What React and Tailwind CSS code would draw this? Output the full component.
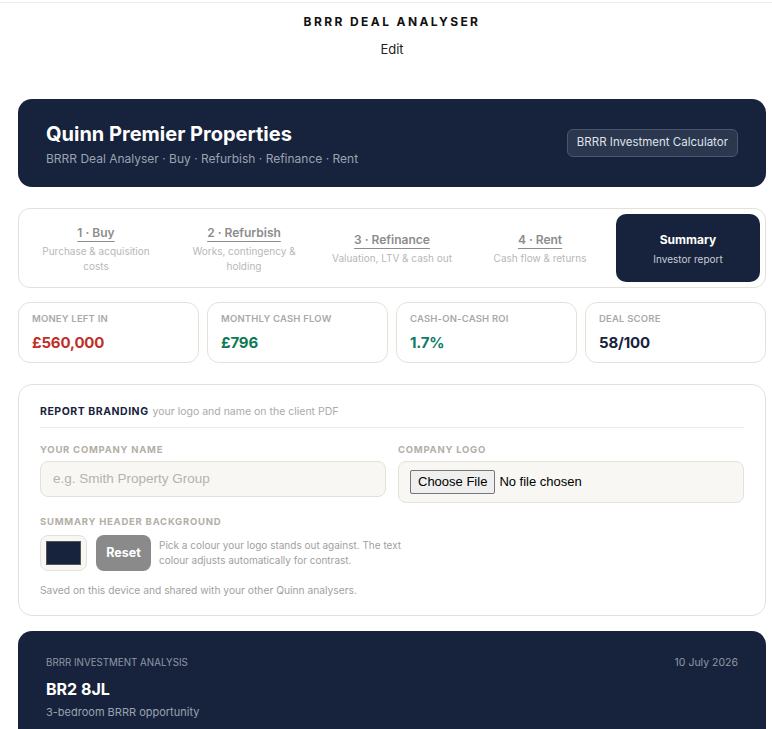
import React from "react";

const F = { fontFamily: "Inter, 'Liberation Sans', sans-serif" };

function Step({ title, sub, active }) {
  if (active) {
    return (
      <div className="flex flex-col items-center justify-center rounded-[10px] bg-[#17233c] h-[68px]">
        <div className="text-[12px] font-bold text-white leading-[16px] mt-[2px]">{title}</div>
        <div className="text-[10px] text-[#c9cdd6] leading-[14px] mt-[4px]">{sub}</div>
      </div>
    );
  }
  return (
    <div className="flex flex-col items-center justify-center h-[68px] px-2 pt-[2px] text-center">
      <div className="text-[12px] font-semibold text-[#8c8c8c] underline underline-offset-[4px] decoration-[#8c8c8c] leading-[16px]">{title}</div>
      <div className="text-[10px] text-[#b8b8b8] leading-[15px] mt-[3px]">{sub}</div>
    </div>
  );
}

function Stat({ label, value, color }) {
  return (
    <div className="rounded-[12px] border border-[#e4e1d8] h-[61px] pl-[13px] pt-[9px]">
      <div className="text-[9.5px] font-semibold text-[#a9a9a9] tracking-[0.02em] leading-[14px]">{label}</div>
      <div className={`text-[15px] font-bold leading-[20px] mt-[7px] tracking-[-0.01em] ${color}`}>{value}</div>
    </div>
  );
}

export default function App() {
  return (
    <div style={F} className="bg-white min-h-[729px] w-[772px] overflow-hidden">
      <div className="h-[2px] bg-white" />
      <div className="h-[1px] bg-[#ececec]" />
      <div className="pl-[18px] pr-[6px]">
        <div className="text-center pt-[11px]">
          <div className="text-[12px] font-bold tracking-[0.2em] text-[#111] leading-[16px]">BRRR DEAL ANALYSER</div>
          <div className="text-[13px] text-[#222] leading-[18px] mt-[10px]">Edit</div>
        </div>

        <div className="mt-[41px] rounded-[14px] bg-[#17233c] h-[88px] flex items-center justify-between pl-[28px] pr-[28px]">
          <div className="pt-[2px]">
            <div className="text-[20px] font-bold text-white leading-[24px]">Quinn Premier Properties</div>
            <div className="text-[12px] text-[#9aa2b1] leading-[16px] mt-[5px]">BRRR Deal Analyser · Buy · Refurbish · Refinance · Rent</div>
          </div>
          <div className="rounded-[6px] border border-[#4b566c] bg-[#2b374e] px-[9px] h-[28px] flex items-center text-[11.5px] text-[#dfe2e8]">BRRR Investment Calculator</div>
        </div>

        <div className="mt-[21px] rounded-[12px] border border-[#e4e1d8] p-[5px] grid grid-cols-5 gap-[4px]">
          <Step title="1 · Buy" sub="Purchase & acquisition costs" />
          <Step title="2 · Refurbish" sub="Works, contingency & holding" />
          <Step title="3 · Refinance" sub="Valuation, LTV & cash out" />
          <Step title="4 · Rent" sub="Cash flow & returns" />
          <Step title="Summary" sub="Investor report" active />
        </div>

        <div className="mt-[14px] grid grid-cols-4 gap-[8px]">
          <Stat label="MONEY LEFT IN" value="£560,000" color="text-[#c0302a]" />
          <Stat label="MONTHLY CASH FLOW" value="£796" color="text-[#0d7a55]" />
          <Stat label="CASH-ON-CASH ROI" value="1.7%" color="text-[#0f7a66]" />
          <Stat label="DEAL SCORE" value="58/100" color="text-[#17233c]" />
        </div>

        <div className="mt-[21px] rounded-[14px] border border-[#e4e1d8] h-[232px] px-[21px] pt-[19px]">
          <div className="flex items-baseline gap-[4px] leading-[16px]">
            <span className="text-[10.5px] font-bold tracking-[0.05em] text-[#17233c]">REPORT BRANDING</span>
            <span className="text-[10.5px] text-[#aaa]">your logo and name on the client PDF</span>
          </div>
          <div className="h-[1px] bg-[#ebe9e4] mt-[7px]" />
          <div className="grid grid-cols-2 gap-[12px] mt-[16px]">
            <div>
              <div className="text-[9.5px] font-bold tracking-[0.08em] text-[#b3aea6] leading-[12px]">YOUR COMPANY NAME</div>
              <div className="mt-[5px] h-[36px] rounded-[8px] border border-[#e4e1d8] bg-[#f8f7f3] flex items-center pl-[12px] text-[13.5px] text-[#b3b3b3]" style={{ fontFamily: "'Liberation Sans', sans-serif" }}>e.g. Smith Property Group</div>
            </div>
            <div>
              <div className="text-[9.5px] font-bold tracking-[0.08em] text-[#b3aea6] leading-[12px]">COMPANY LOGO</div>
              <div className="mt-[5px] h-[42px] rounded-[8px] border border-[#e4e1d8] bg-[#f8f7f3] flex items-center pl-[11px]" style={{ fontFamily: "'Liberation Sans', sans-serif" }}>
                <span className="h-[24px] px-[7px] border border-[#767676] rounded-[2px] bg-[#efefef] text-[13px] text-black flex items-center">Choose File</span>
                <span className="text-[13px] text-black ml-[4px]">No file chosen</span>
              </div>
            </div>
          </div>
          <div className="text-[9.5px] font-bold tracking-[0.08em] text-[#b3aea6] leading-[12px] mt-[13px]">SUMMARY HEADER BACKGROUND</div>
          <div className="flex items-center mt-[7px]">
            <div className="w-[47px] h-[36px] rounded-[8px] border border-[#e4e1d8] bg-[#f8f7f3] flex items-center justify-center">
              <div className="w-[35px] h-[24px] bg-[#17233c] border border-[#555]" />
            </div>
            <div className="ml-[9px] w-[55px] h-[36px] rounded-[8px] bg-[#8a8a8a] text-white text-[12.5px] font-bold flex items-center justify-center">Reset</div>
            <div className="ml-[8px] text-[10px] text-[#9f9f9f] leading-[15px] w-[260px]">Pick a colour your logo stands out against. The text colour adjusts automatically for contrast.</div>
          </div>
          <div className="text-[10.25px] text-[#9f9f9f] mt-[12px] leading-[14px]">Saved on this device and shared with your other Quinn analysers.</div>
        </div>

        <div className="mt-[15px] rounded-t-[14px] bg-[#17233c] h-[110px] px-[28px] pt-[25px]">
          <div className="flex justify-between items-center">
            <div className="text-[9.75px] text-[#8f97a6] leading-[14px]">BRRR INVESTMENT ANALYSIS</div>
            <div className="text-[10.5px] text-[#8f97a6] leading-[14px]">10 July 2026</div>
          </div>
          <div className="text-[16px] font-bold text-white mt-[8px] leading-[22px]">BR2 8JL</div>
          <div className="text-[11px] text-[#9aa2b1] mt-[5px] leading-[14px]">3-bedroom BRRR opportunity</div>
        </div>
      </div>
    </div>
  );
}
